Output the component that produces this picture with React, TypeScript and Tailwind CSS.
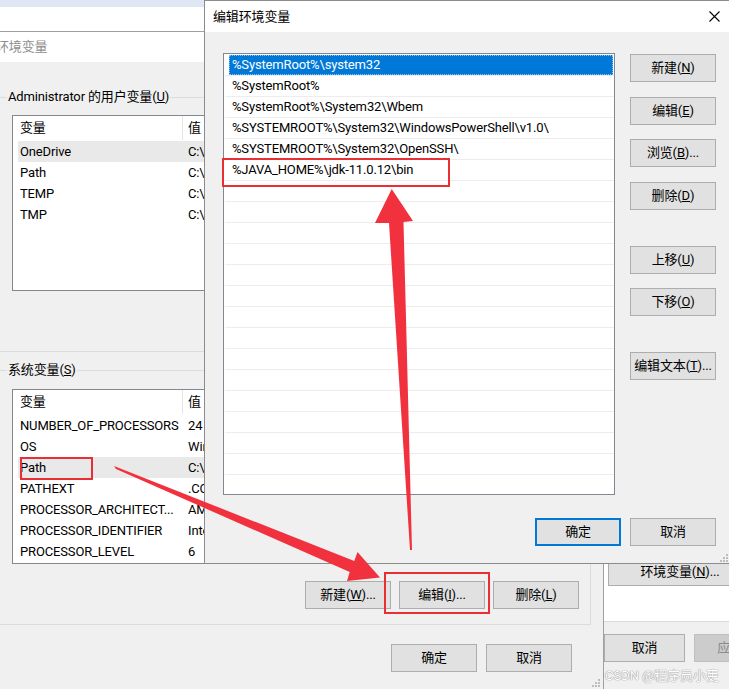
import React from "react";

type BtnProps = {
  children?: React.ReactNode;
  w?: string;
  mt?: string;
  variant?: "normal" | "primary" | "disabled";
};

function Btn({ children, w = "w-[86px]", mt = "", variant = "normal" }: BtnProps) {
  const look =
    variant === "primary"
      ? "border-2 border-[#0078d7] bg-[#e1e1e1] text-black"
      : variant === "disabled"
      ? "border border-[#bfbfbf] bg-[#cccccc] text-[#8a8a8a]"
      : "border border-[#adadad] bg-[#e1e1e1] text-black";
  return (
    <div
      className={`flex items-center justify-center h-[28px] shrink-0 text-[13px] whitespace-nowrap ${w} ${mt} ${look}`}
    >
      {children}
    </div>
  );
}

function Grip({ pos }: { pos: string }) {
  return (
    <svg className={`absolute ${pos}`} width="10" height="10" viewBox="0 0 10 10">
      <g fill="#bdbdbd">
        <rect x="8" y="2" width="2" height="2" />
        <rect x="5" y="5" width="2" height="2" />
        <rect x="8" y="5" width="2" height="2" />
        <rect x="2" y="8" width="2" height="2" />
        <rect x="5" y="8" width="2" height="2" />
        <rect x="8" y="8" width="2" height="2" />
      </g>
    </svg>
  );
}

function VarList({
  rows,
  hl,
  heightClass,
}: {
  rows: [string, string][];
  hl: number;
  heightClass: string;
}) {
  return (
    <div
      className={`ml-[15px] w-[571px] bg-white border border-[#828790] overflow-hidden ${heightClass}`}
    >
      <div className="flex h-[24px] text-[13px]">
        <div className="w-[170px] h-full flex items-center pl-[7px] border-r border-[#e5e5e5]">
          变量
        </div>
        <div className="h-full flex items-center pl-[5px]">值</div>
      </div>
      <div className="mt-[1px]">
        {rows.map(([k, v], i) => (
          <div
            key={k}
            className={`ml-[5px] mr-[1px] h-[21px] flex items-center text-[13px] whitespace-nowrap ${
              i === hl ? "bg-[#e9e9e9]" : ""
            }`}
          >
            <div className="w-[164px] shrink-0 pl-[2px] overflow-hidden">{k}</div>
            <div className="pl-[6px]">{v}</div>
          </div>
        ))}
      </div>
    </div>
  );
}

const userRows: [string, string][] = [
  ["OneDrive", "C:\\Users\\Administrator\\OneDrive"],
  ["Path", "C:\\Users\\Administrator\\AppData\\Local\\Microsoft\\WindowsApps;"],
  ["TEMP", "C:\\Users\\Administrator\\AppData\\Local\\Temp"],
  ["TMP", "C:\\Users\\Administrator\\AppData\\Local\\Temp"],
];

const sysRows: [string, string][] = [
  ["NUMBER_OF_PROCESSORS", "24"],
  ["OS", "Windows_NT"],
  ["Path", "C:\\Windows\\system32;C:\\Windows;"],
  ["PATHEXT", ".COM;.EXE;.BAT;.CMD;.VBS"],
  ["PROCESSOR_ARCHITECT...", "AMD64"],
  ["PROCESSOR_IDENTIFIER", "Intel64 Family 6 Model 151"],
  ["PROCESSOR_LEVEL", "6"],
];

function EnvWindow() {
  return (
    <div className="relative w-[604px] shrink-0 flex flex-col border-t border-r border-[#a0a0a0] bg-[#f0f0f0]">
      <div className="h-[30px] shrink-0 bg-white flex items-center overflow-hidden">
        <span className="-ml-[4px] text-[13px] text-[#8e8e8e] whitespace-nowrap">环境变量</span>
      </div>
      <div className="flex-1 pt-[25px]">
        <fieldset className="-ml-[4px] w-[595px] border border-[#dcdcdc]">
          <legend className="ml-[10px] px-[1px] leading-[20px] text-[13px]">
            Administrator 的用户变量(<u>U</u>)
          </legend>
          <div className="mt-[8px]">
            <VarList rows={userRows} hl={0} heightClass="h-[176px]" />
          </div>
          <div className="mt-[17px] pr-[11px] flex justify-end gap-[8px]">
            <Btn>
              新建(<u>N</u>)...
            </Btn>
            <Btn>
              编辑(<u>E</u>)...
            </Btn>
            <Btn>
              删除(<u>D</u>)
            </Btn>
          </div>
          <div className="h-[15px]" />
        </fieldset>
        <fieldset className="mt-[8px] -ml-[4px] w-[595px] border border-[#dcdcdc]">
          <legend className="ml-[10px] px-[1px] leading-[20px] text-[13px]">
            系统变量(<u>S</u>)
          </legend>
          <div className="mt-[9px]">
            <VarList rows={sysRows} hl={2} heightClass="h-[175px]" />
          </div>
          <div className="mt-[17px] pr-[11px] flex justify-end gap-[8px]">
            <Btn>
              新建(<u>W</u>)...
            </Btn>
            <Btn>
              编辑(<u>I</u>)...
            </Btn>
            <Btn>
              删除(<u>L</u>)
            </Btn>
          </div>
          <div className="h-[15px]" />
        </fieldset>
        <div className="mt-[19px] pr-[31px] flex justify-end gap-[9px]">
          <Btn>确定</Btn>
          <Btn>取消</Btn>
        </div>
      </div>
      <Grip pos="right-[3px] bottom-[2px]" />
    </div>
  );
}

function SysPropsWindow() {
  return (
    <div className="flex-1 flex flex-col overflow-hidden">
      <div className="flex-1 bg-white flex flex-col justify-end pb-[35px] pl-[4px]">
        <Btn w="w-[144px]">
          环境变量(<u>N</u>)...
        </Btn>
      </div>
      <div className="h-[68px] shrink-0 bg-[#f0f0f0] border-t border-[#dadada] pt-[12px] flex gap-[9px]">
        <Btn w="w-[81px]">取消</Btn>
        <Btn w="w-[72px]" variant="disabled">
          应用
        </Btn>
      </div>
    </div>
  );
}

const paths = [
  "%SystemRoot%\\system32",
  "%SystemRoot%",
  "%SystemRoot%\\System32\\Wbem",
  "%SYSTEMROOT%\\System32\\WindowsPowerShell\\v1.0\\",
  "%SYSTEMROOT%\\System32\\OpenSSH\\",
  "%JAVA_HOME%\\jdk-11.0.12\\bin",
];

function EditDialog() {
  const rows = [...paths, ...Array.from({ length: 15 }, () => "")];
  return (
    <div className="absolute left-[204px] top-0 w-[526px] h-[564px] flex flex-col border border-[#8c8c8c] bg-[#f0f0f0]">
      <div className="h-[31px] shrink-0 bg-white flex items-center justify-between pl-[8px] pr-[9px]">
        <span className="text-[13px]">编辑环境变量</span>
        <svg width="11" height="11" viewBox="0 0 11 11">
          <path d="M0.5 0.5 L10.5 10.5 M10.5 0.5 L0.5 10.5" stroke="#000" strokeWidth="1.1" fill="none" />
        </svg>
      </div>
      <div className="relative flex-1 pt-[21px] pl-[18px]">
        <div className="flex">
          <div className="w-[392px] h-[442px] shrink-0 bg-white border border-[#828790] overflow-hidden pt-[1px]">
            {rows.map((p, i) => (
              <div
                key={i}
                className="ml-[1px] h-[21px] border-b border-[#ededed] flex text-[13px] whitespace-nowrap"
              >
                {i === 0 ? (
                  <div className="ml-[4px] mr-[1px] flex-1 flex items-center pl-[2px] bg-[#0078d7] text-white border border-dotted border-[#8cc4f0]">
                    {p}
                  </div>
                ) : (
                  <div className="flex items-center pl-[7px]">{p}</div>
                )}
              </div>
            ))}
          </div>
          <div className="ml-[15px] mt-[1px] flex flex-col">
            <Btn>
              新建(<u>N</u>)
            </Btn>
            <Btn mt="mt-[15px]">
              编辑(<u>E</u>)
            </Btn>
            <Btn mt="mt-[14px]">
              浏览(<u>B</u>)...
            </Btn>
            <Btn mt="mt-[15px]">
              删除(<u>D</u>)
            </Btn>
            <Btn mt="mt-[36px]">
              上移(<u>U</u>)
            </Btn>
            <Btn mt="mt-[14px]">
              下移(<u>O</u>)
            </Btn>
            <Btn mt="mt-[36px]">
              编辑文本(<u>T</u>)...
            </Btn>
          </div>
        </div>
        <div className="mt-[23px] pr-[13px] flex justify-end gap-[9px]">
          <Btn variant="primary">确定</Btn>
          <Btn>取消</Btn>
        </div>
        <Grip pos="right-[1px] bottom-[1px]" />
      </div>
    </div>
  );
}

function Annotations() {
  return (
    <>
      <div className="absolute left-[222px] top-[158px] w-[228px] h-[29px] border-2 border-[#ea2e36]" />
      <div className="absolute left-[20px] top-[457px] w-[73px] h-[23px] border-2 border-[#ea2e36]" />
      <div className="absolute left-[384px] top-[572px] w-[106px] h-[42px] border-2 border-[#ea2e36]" />
      <svg
        className="absolute left-0 top-0 pointer-events-none"
        width="729"
        height="689"
        viewBox="0 0 729 689"
      >
        <polygon fill="#f2313f" points="391.7,189 413,221 403.5,222 412,550 410,550 389,223 375,223" />
        <polygon
          fill="#f2313f"
          points="114,466 354.3,561 357.5,552 380,577.5 347,581 349.7,572 116,469"
        />
      </svg>
    </>
  );
}

export default function App() {
  return (
    <div className="relative w-[729px] h-[689px] overflow-hidden bg-white text-black text-[13px] tracking-[-0.15px] font-['Roboto','Noto_Sans_CJK_SC',sans-serif]">
      <div className="h-[7px] bg-[#dfe7f5]" />
      <div className="h-[24px] bg-white" />
      <div className="flex h-[658px]">
        <EnvWindow />
        <SysPropsWindow />
      </div>
      <EditDialog />
      <Annotations />
      <div className="absolute left-[605px] top-[667px] text-[13px] leading-[18px] tracking-[0px] whitespace-nowrap text-white [text-shadow:0_0_1px_#8a8a8a,0_0_1px_#8a8a8a]">
        CSDN @程序员小吏
      </div>
    </div>
  );
}
